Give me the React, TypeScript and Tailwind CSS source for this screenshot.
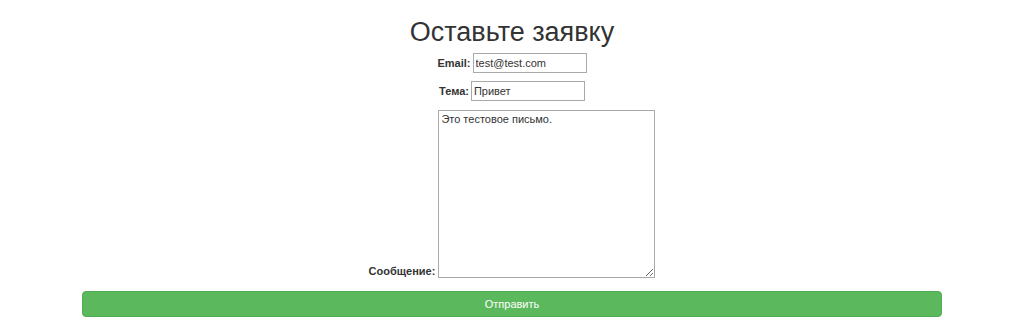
const FONT = "font-['Liberation_Sans',Arial,Helvetica,sans-serif]"

export default function App() {
  return (
    <div className={`min-h-[327px] bg-white text-[#333] ${FONT}`}>
      <div className="mx-auto w-[860px] pt-[15px]">
        {/* Заголовок */}
        <h1 className="text-center text-[27px] leading-[34px] font-normal">Оставьте заявку</h1>

        {/* Email */}
        <div className="mt-[4px] flex items-center justify-center gap-[2px]">
          <label className="text-[11px] font-bold">Email:</label>
          <input
            type="text"
            defaultValue="test@test.com"
            className="h-[20px] w-[114px] border border-[#a9a9a9] px-[2px] text-[11px] text-[#333] outline-none"
          />
        </div>

        {/* Тема */}
        <div className="mt-[8px] flex items-center justify-center gap-[2px]">
          <label className="text-[11px] font-bold">Тема:</label>
          <input
            type="text"
            defaultValue="Привет"
            className="h-[20px] w-[114px] border border-[#a9a9a9] px-[2px] text-[11px] text-[#333] outline-none"
          />
        </div>

        {/* Сообщение */}
        <div className="mt-[9px] flex items-end justify-center gap-[3px]">
          <label className="text-[11px] leading-[13px] font-bold">Сообщение:</label>
          <textarea
            defaultValue="Это тестовое письмо."
            className="h-[168px] w-[217px] border border-[#a9a9a9] px-[2px] py-[2px] text-[11px] leading-[13px] text-[#333] outline-none"
          />
        </div>

        {/* Кнопка */}
        <button
          type="button"
          className="mt-[13px] block h-[26px] w-full rounded-[4px] border border-[#4cae4c] bg-[#5cb85c] text-[11px] text-white"
        >
          Отправить
        </button>
      </div>
    </div>
  )
}
